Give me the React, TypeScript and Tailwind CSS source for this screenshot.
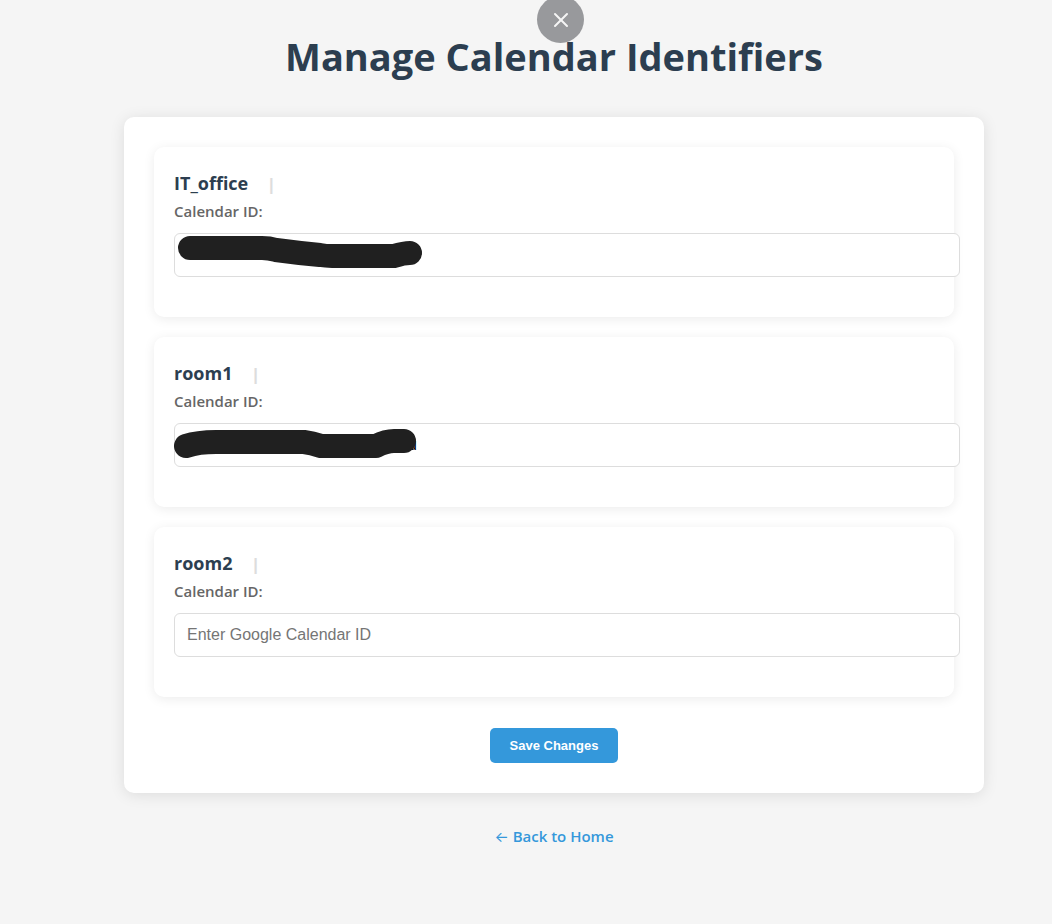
import { X } from 'lucide-react';

type Room = {
  name: string;
  stroke?: string;
  tail?: string;
};

const rooms: Room[] = [
  {
    name: 'IT_office',
    stroke: 'M16 15H88Q95 15 102 17Q124 20 146 22Q152 23 158 23H220Q230 20 236 20',
  },
  {
    name: 'room1',
    stroke: 'M12 23Q24 19 42 19H130Q138 20 147 23H202Q212 18 220 18Q226 18 230 18',
    tail: 'u',
  },
  { name: 'room2' },
];

function RoomCard({ name, stroke, tail }: Room) {
  const id = `calendar-${name}`;
  return (
    <section className="rounded-[10px] bg-white px-5 pt-[23px] pb-10 shadow-[0_2px_12px_rgba(0,0,0,0.08)]">
      <div className="flex items-center gap-[19px]">
        <h2 className="text-lg leading-[27px] font-bold text-[#2c3e50]">{name}</h2>
        <span className="pt-px text-base leading-[26px] font-extrabold text-[#dddddd]">|</span>
      </div>
      <label htmlFor={id} className="block text-[15px] leading-7 font-semibold text-[#666666]">
        Calendar ID:
      </label>
      <div className="relative mt-2 -mr-[26px]">
        <input
          id={id}
          type="text"
          placeholder={stroke ? undefined : 'Enter Google Calendar ID'}
          className="block h-11 w-full rounded-md border border-[#dddddd] bg-white px-3 font-['Liberation_Sans',Arial,sans-serif] text-base text-black placeholder:text-[#757575]"
        />
        {stroke && (
          <svg
            aria-hidden="true"
            viewBox="0 0 260 44"
            className="pointer-events-none absolute top-0 left-0 h-11 w-[260px]"
          >
            {tail && (
              <text x="234" y="27" fontSize="16" fontFamily="Liberation Sans, Arial, sans-serif" fill="#000000">
                {tail}
              </text>
            )}
            <path
              d={stroke}
              fill="none"
              stroke="#202020"
              strokeWidth="24"
              strokeLinecap="round"
              strokeLinejoin="round"
            />
          </svg>
        )}
      </div>
    </section>
  );
}

export default function App() {
  return (
    <div className="relative min-h-screen bg-[#f5f5f5] pl-14 font-['Open_Sans','Noto_Sans',sans-serif]">
      <main className="mx-auto max-w-[860px] pt-7 pb-10">
        <h1 className="text-center text-[38px] leading-[57px] font-bold text-[#2c3e50]">
          Manage Calendar Identifiers
        </h1>
        <form
          onSubmit={(event) => event.preventDefault()}
          className="mt-8 rounded-[10px] bg-white p-[30px] shadow-[0_2px_15px_rgba(0,0,0,0.1)]"
        >
          <div className="flex flex-col gap-5">
            {rooms.map((room) => (
              <RoomCard key={room.name} {...room} />
            ))}
          </div>
          <div className="mt-[31px] flex justify-center">
            <button
              type="submit"
              className="h-[35px] rounded-[5px] bg-[#3498db] px-5 font-['Liberation_Sans',Arial,sans-serif] text-[13px] font-semibold text-white"
            >
              Save Changes
            </button>
          </div>
        </form>
        <div className="mt-[29px] text-center">
          <a href="#" className="text-[15px] leading-7 font-semibold text-[#3498db]">
            <span className="font-['Inter',sans-serif] font-normal">←</span> Back to Home
          </a>
        </div>
      </main>
      <button
        type="button"
        aria-label="Close"
        className="absolute -top-1 left-[537px] flex size-[47px] items-center justify-center rounded-full bg-[#98999c] text-[#f5f5f5]"
      >
        <X size={24} strokeWidth={2} aria-hidden="true" />
      </button>
    </div>
  );
}
